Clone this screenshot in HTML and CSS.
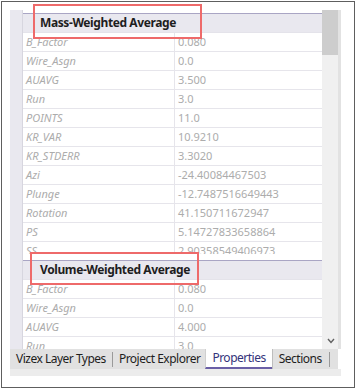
FILE: index.html
```html
<!DOCTYPE html>
<html lang="en">
<head>
    <meta charset="UTF-8">
    <title>Properties</title>
    <link rel="stylesheet" href="styles.css">
</head>
<body>

<div class="frame">
    <div class="panel">

        <!-- property grid + scrollbar -->
        <div class="grid-area">
            <div class="gutter"></div>

            <div class="grid">
                <div class="cat">Mass-Weighted Average</div>
                <div class="row"><span class="name">B_Factor</span><span class="val">0.080</span></div>
                <div class="row"><span class="name">Wire_Asgn</span><span class="val">0.0</span></div>
                <div class="row"><span class="name">AUAVG</span><span class="val">3.500</span></div>
                <div class="row"><span class="name">Run</span><span class="val">3.0</span></div>
                <div class="row"><span class="name">POINTS</span><span class="val">11.0</span></div>
                <div class="row"><span class="name">KR_VAR</span><span class="val">10.9210</span></div>
                <div class="row"><span class="name">KR_STDERR</span><span class="val">3.3020</span></div>
                <div class="row"><span class="name">Azi</span><span class="val">-24.40084467503</span></div>
                <div class="row"><span class="name">Plunge</span><span class="val">-12.7487516649443</span></div>
                <div class="row"><span class="name">Rotation</span><span class="val">41.150711672947</span></div>
                <div class="row"><span class="name">PS</span><span class="val">5.14727833658864</span></div>
                <div class="row cut"><span class="name">SS</span><span class="val">2.90358549406973</span></div>

                <div class="cat">Volume-Weighted Average</div>
                <div class="row"><span class="name">B_Factor</span><span class="val">0.080</span></div>
                <div class="row"><span class="name">Wire_Asgn</span><span class="val">0.0</span></div>
                <div class="row"><span class="name">AUAVG</span><span class="val">4.000</span></div>
                <div class="row"><span class="name">Run</span><span class="val">3.0</span></div>
            </div>

            <div class="scrollbar">
                <div class="thumb"></div>
                <svg class="arrow" width="8" height="6" viewBox="0 0 8 6">
                    <polyline points="1,1 4,4.5 7,1" fill="none" stroke="#606060" stroke-width="1.4"/>
                </svg>
            </div>
            <div class="edge"></div>
        </div>

        <!-- bottom tabs -->
        <div class="tabs">
            <span class="tab">Vizex Layer Types</span>
            <span class="sep"></span>
            <span class="tab">Project Explorer</span>
            <span class="tab active">Properties</span>
            <span class="tab boxed">Sections</span>
            <span class="sep"></span>
        </div>
        <div class="tabs-foot"></div>
    </div>
</div>

<!-- red callouts drawn over the screenshot -->
<div class="callout first"></div>
<div class="callout second"></div>

</body>
</html>
```

FILE: styles.css
```css
body {
    margin: 0;
    padding: 1px;
    width: 356px;
    height: 389px;
    box-sizing: border-box;
    background: #ffffff;
    font-family: 'Noto Sans', 'Open Sans', sans-serif;
    position: relative;
}

.frame {
    width: 354px;
    height: 387px;
    box-sizing: border-box;
    border: 1px solid #5e5e5e;
    padding: 8px;
}

.panel {
    width: 331px;
}

.grid-area {
    display: flex;
    height: 339px;
}

.gutter {
    width: 12px;
    background-color: #e9e8ef;
    border-right: 1px solid #d7d6df;
}

.grid {
    flex: 1;
    padding-top: 3px;
    overflow: hidden;
    background: #ffffff;
}

.cat {
    height: 18px;
    line-height: 18px;
    border-top: 1px solid #a9a5c4;
    border-bottom: 1px solid #e4e3ea;
    background-color: #e9e8ef;
    padding-left: 17px;
    font-size: 12px;
    font-weight: bold;
    letter-spacing: -0.4px;
    color: #1e1e1e;
    white-space: nowrap;
}

.row {
    display: flex;
    height: 18px;
    line-height: 18px;
    border-bottom: 1px solid #e6e5eb;
    font-size: 11px;
    color: #acacac;
    white-space: nowrap;
}

.row.cut {
    height: 12px;
    overflow: hidden;
    border-bottom: none;
    margin-bottom: 6px;
}

.name {
    width: 148px;
    padding-left: 3px;
    border-right: 1px solid #e6e5eb;
    font-style: italic;
}

.val {
    padding-left: 3px;
}

.scrollbar {
    width: 16px;
    background-color: #f0f0f0;
    display: flex;
    flex-direction: column;
    align-items: center;
}

.thumb {
    width: 16px;
    height: 45px;
    background-color: #cdcdcd;
}

.arrow {
    margin-top: auto;
    margin-bottom: 5px;
    margin-left: 2px;
}

.edge {
    width: 3px;
    background-color: #e2e2e2;
}

.tabs {
    display: flex;
    align-items: stretch;
    height: 20px;
    width: 328px;
    background-color: #e1e1e1;
    font-size: 12px;
    letter-spacing: -0.5px;
    color: #1e1e1e;
    padding-left: 3px;
    box-sizing: border-box;
}

.tab {
    line-height: 19px;
    padding: 0 3px;
    white-space: nowrap;
}

.sep {
    width: 1px;
    margin: 3px 3px 2px;
    background-color: #9a9a9a;
}

.tab.active {
    background: #ffffff;
    color: #33337a;
    border-bottom: 2px solid #6a5fa6;
    border-left: 1px solid #cfcfcf;
    padding: 0 6px;
    margin-left: 2px;
    line-height: 18px;
}

.tab.boxed {
    border-left: 1px solid #bdbdbd;
    padding: 0 4px 0 6px;
}

.tabs-foot {
    height: 7px;
    width: 331px;
    background-color: #ececec;
}

.callout {
    position: absolute;
    box-sizing: border-box;
    border: 2px solid #ee6a6a;
}

.callout.first {
    left: 33px;
    top: 4px;
    width: 169px;
    height: 35px;
}

.callout.second {
    left: 30px;
    top: 252px;
    width: 169px;
    height: 33px;
}
```
